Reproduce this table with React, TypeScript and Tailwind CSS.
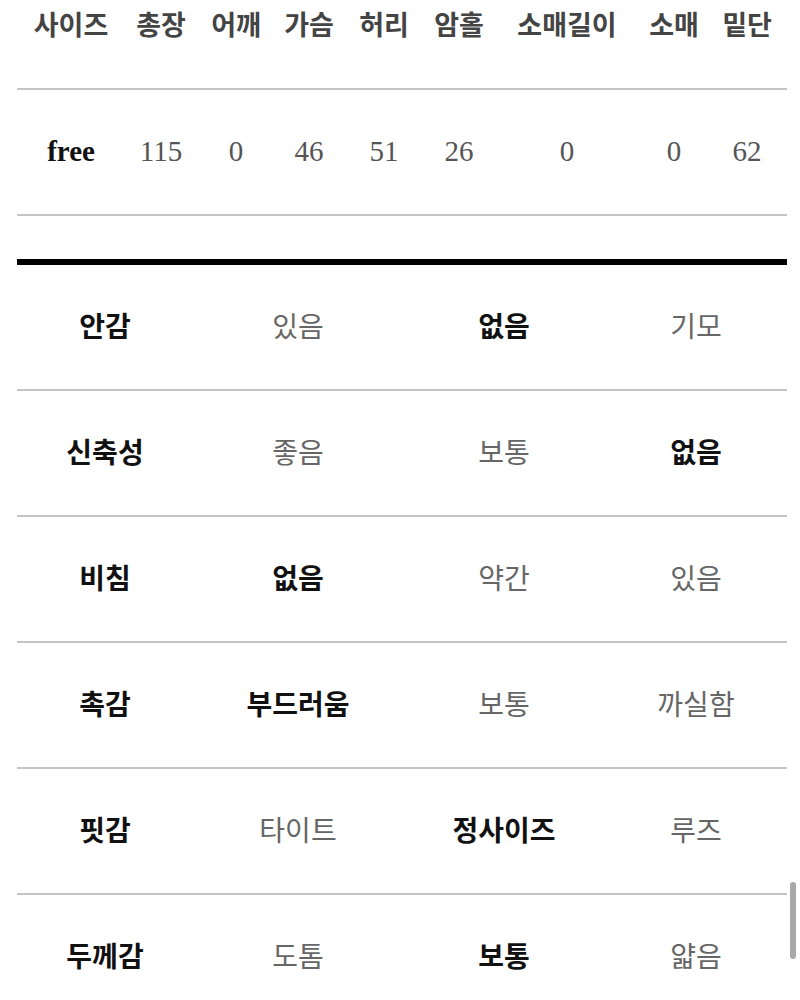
import React from 'react';

const sizeHeaders = ['사이즈', '총장', '어깨', '가슴', '허리', '암홀', '소매길이', '소매', '밑단'];
const sizeValues = ['115', '0', '46', '51', '26', '0', '0', '62'];

type Cell = { label: string; on: boolean };

const fabricRows: { name: string; cells: Cell[] }[] = [
  { name: '안감', cells: [{ label: '있음', on: false }, { label: '없음', on: true }, { label: '기모', on: false }] },
  { name: '신축성', cells: [{ label: '좋음', on: false }, { label: '보통', on: false }, { label: '없음', on: true }] },
  { name: '비침', cells: [{ label: '없음', on: true }, { label: '약간', on: false }, { label: '있음', on: false }] },
  { name: '촉감', cells: [{ label: '부드러움', on: true }, { label: '보통', on: false }, { label: '까실함', on: false }] },
  { name: '핏감', cells: [{ label: '타이트', on: false }, { label: '정사이즈', on: true }, { label: '루즈', on: false }] },
  { name: '두께감', cells: [{ label: '도톰', on: false }, { label: '보통', on: true }, { label: '얇음', on: false }] },
];

const kr = "font-['Noto_Sans_CJK_KR',sans-serif]";

const App: React.FC = () => {
  return (
    <div className="relative h-[1000px] w-[800px] overflow-hidden bg-white">
      <div className="pl-[17px] pr-[13px]">
        {/* Size table */}
        <div className={`grid h-[88px] grid-cols-[108px_72px_78px_68px_82px_68px_148px_66px_80px] pt-[5px] ${kr}`}>
          {sizeHeaders.map((h) => (
            <div key={h} className="text-center text-[27px] font-bold leading-[38px] text-[#444]">
              {h}
            </div>
          ))}
        </div>
        <div className="h-[2px] bg-[#c4c4c4]" />
        <div className="grid h-[124px] grid-cols-[108px_72px_78px_68px_82px_68px_148px_66px_80px] items-center font-['Liberation_Serif',serif] text-[29px]">
          <div className="text-center font-bold text-[#111]">free</div>
          {sizeValues.map((v, i) => (
            <div key={i} className="text-center text-[#555]">
              {v}
            </div>
          ))}
        </div>
        <div className="h-[2px] bg-[#c4c4c4]" />
        <div className="h-[43px]" />
        <div className="h-[6px] bg-black" />

        {/* Fabric table */}
        <div className={kr}>
          {fabricRows.map((row, ri) => (
            <div key={row.name}>
              {ri > 0 && <div className="h-[2px] bg-[#c4c4c4]" />}
              <div className="grid h-[124px] grid-cols-[176px_210px_202px_182px] items-center pb-[5px] text-[28px]">
                <div className="text-center font-bold text-[#111]">{row.name}</div>
                {row.cells.map((c, ci) => (
                  <div
                    key={ci}
                    className={c.on ? 'text-center font-bold text-[#111]' : 'text-center text-[#666]'}
                  >
                    {c.label}
                  </div>
                ))}
              </div>
            </div>
          ))}
        </div>
      </div>

      {/* overlay scrollbar */}
      <div className="absolute right-[4px] top-[882px] h-[77px] w-[6px] rounded-full bg-[#a8a8a8]" />
    </div>
  );
};

export default App;
